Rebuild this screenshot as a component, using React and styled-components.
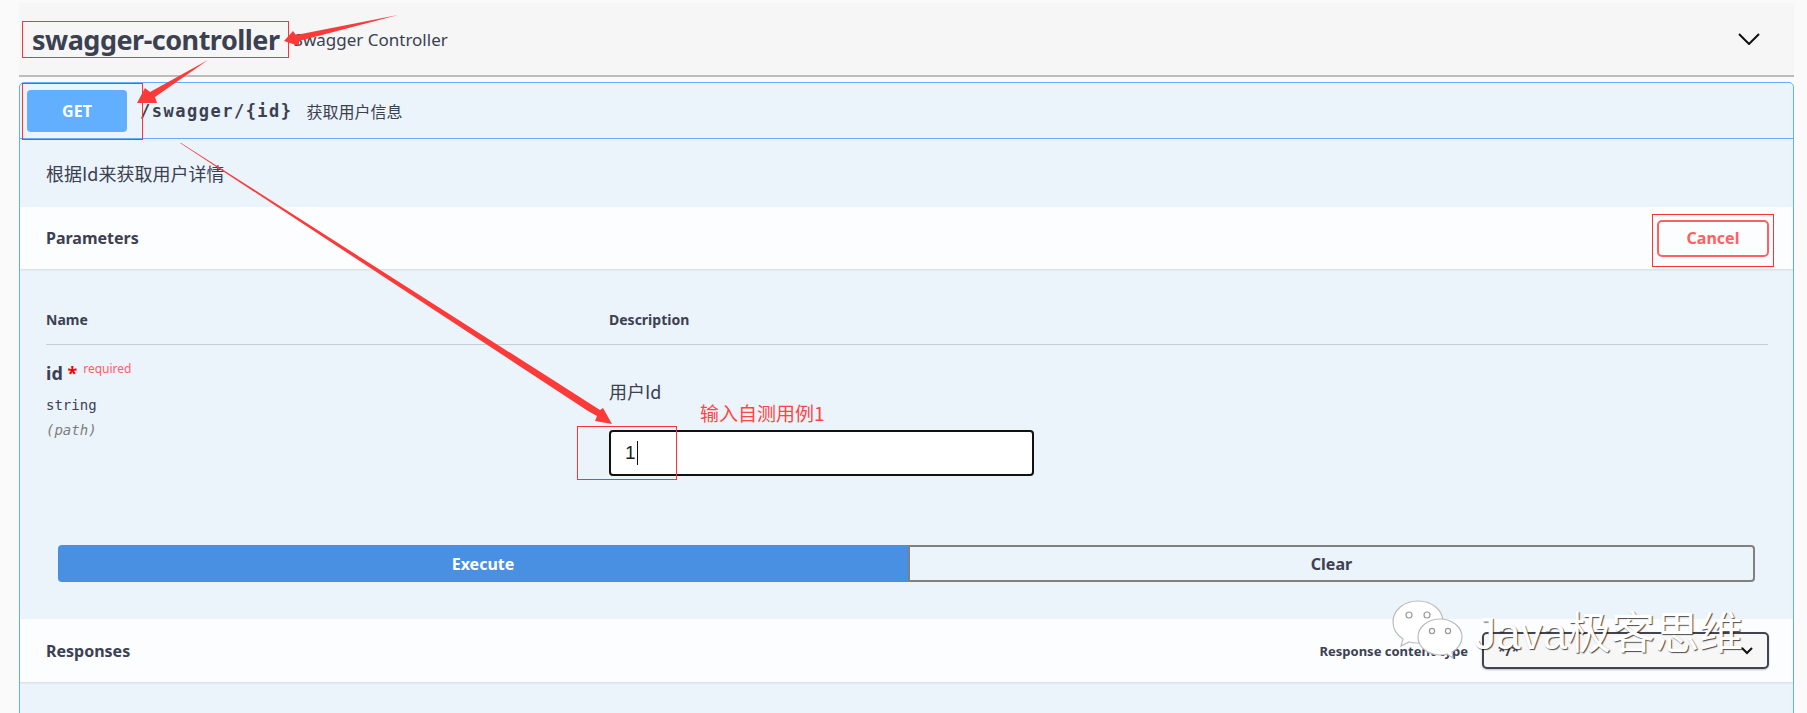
import React from 'react';
import styled, { createGlobalStyle } from 'styled-components';

const sans = '"Noto Sans", "Noto Sans CJK SC", sans-serif';
const cjk = '"Noto Sans CJK SC", "Noto Sans", sans-serif';
const mono = '"DejaVu Sans Mono", "Noto Sans CJK SC", monospace';

const GlobalStyle = createGlobalStyle`
  html, body {
    margin: 0;
    padding: 0;
    background: #fafafa;
    font-family: ${sans};
    color: #3b4151;
  }
`;

const App = () => {
  return (
    <Page>
      <GlobalStyle />
      <TagHeader>
        <TagTitle>swagger-controller</TagTitle>
        <TagNote>Swagger Controller</TagNote>
        <TagChevron viewBox="0 0 22 12" aria-hidden="true">
          <path d="M1 1l10 10L21 1" />
        </TagChevron>
      </TagHeader>

      <Opblock>
        <Summary>
          <MethodBadge>GET</MethodBadge>
          <PathText>/swagger/{'{id}'}</PathText>
          <SummaryNote>获取用户信息</SummaryNote>
        </Summary>

        <Description>根据Id来获取用户详情</Description>

        <SectionHeader>
          <SectionTitle>Parameters</SectionTitle>
          <CancelButton>Cancel</CancelButton>
        </SectionHeader>

        <ParamTable>
          <ParamHead>
            <HeadCell>Name</HeadCell>
            <HeadCell>Description</HeadCell>
          </ParamHead>
          <ParamRow>
            <div>
              <ParamName>
                id <Star>*</Star>
                <Required>required</Required>
              </ParamName>
              <ParamType>string</ParamType>
              <ParamIn>(path)</ParamIn>
            </div>
            <ParamBody>
              <ParamDesc>用户Id</ParamDesc>
              <InputBox>
                1<Caret />
              </InputBox>
            </ParamBody>
          </ParamRow>
        </ParamTable>

        <ButtonRow>
          <ExecuteButton>Execute</ExecuteButton>
          <ClearButton>Clear</ClearButton>
        </ButtonRow>

        <ResponsesHeader>
          <SectionTitle>Responses</SectionTitle>
          <ContentType>
            <ContentLabel>Response content type</ContentLabel>
            <SelectBox>
              */*
              <SelectChevron viewBox="0 0 12 8" aria-hidden="true">
                <path d="M1 1l5 5 5-5" />
              </SelectChevron>
            </SelectBox>
          </ContentType>
        </ResponsesHeader>
      </Opblock>

      <Annotations viewBox="0 0 1807 713" aria-hidden="true">
        <rect x="22.5" y="21.5" width="266" height="36" />
        <rect x="22.5" y="83.5" width="120" height="56" />
        <rect x="1652.5" y="214.5" width="121" height="52" />
        <rect x="577.5" y="426.5" width="99" height="53" />
        <polygon points="284,41 293,31 296,35 398,15 299,41 299,46" />
        <polygon points="137,103 145,88 150,92 208,60 155,97 157,103" />
        <polygon points="180,143 181,143 600,410 603,408 612,424 595,421 597,416 588,411" />
      </Annotations>

      <AnnotationText>输入自测用例1</AnnotationText>

      <Watermark>
        <WechatLogo viewBox="0 0 72 60" aria-hidden="true">
          <path className="bubble" d="M26 1C12 1 1 10 1 22c0 7 4 13 10 17l-2 7 8-4c3 1 6 1 9 1 14 0 25-9 25-21S40 1 26 1z" />
          <path className="bubble" d="M48 19c-12 0-22 8-22 18s10 18 22 18c2 0 5 0 7-1l6 4-1-6c6-3 10-9 10-15 0-10-10-18-22-18z" />
          <circle cx="17" cy="15" r="3" />
          <circle cx="35" cy="15" r="3" />
          <circle cx="40" cy="31" r="2.6" />
          <circle cx="56" cy="31" r="2.6" />
        </WechatLogo>
        <WatermarkText>Java极客思维</WatermarkText>
      </Watermark>
    </Page>
  );
};

const Page = styled.div`
  position: relative;
  width: 1807px;
  height: 713px;
  overflow: hidden;
  box-sizing: border-box;
  padding: 3px 13px 0 19px;
`;

const TagHeader = styled.div`
  display: flex;
  align-items: center;
  height: 72px;
  padding: 0 34px 0 13px;
  background: #f6f6f6;
  border-bottom: 2px solid #bdbdbd;
`;

const TagTitle = styled.span`
  font-size: 27px;
  font-weight: 700;
  letter-spacing: -0.5px;
  color: #3b4151;
`;

const TagNote = styled.span`
  margin-left: 14px;
  font-size: 17px;
  color: #3b4151;
`;

const TagChevron = styled.svg`
  margin-left: auto;
  width: 22px;
  height: 12px;
  fill: none;
  stroke: #111;
  stroke-width: 2;
`;

const Opblock = styled.div`
  margin-top: 5px;
  height: 640px;
  background: #ebf3fb;
  border: 1px solid #61affe;
  border-radius: 5px;
`;

const Summary = styled.div`
  display: flex;
  align-items: center;
  height: 55px;
  padding: 0 7px;
  border-bottom: 1px solid #61affe;
`;

const MethodBadge = styled.div`
  display: flex;
  align-items: center;
  justify-content: center;
  width: 100px;
  height: 42px;
  border-radius: 4px;
  background: #61affe;
  color: #fff;
  font-size: 16px;
  font-weight: 700;
`;

const PathText = styled.span`
  margin-left: 13px;
  font-family: ${mono};
  font-size: 17px;
  font-weight: 700;
  letter-spacing: 1.5px;
  color: #3b4151;
`;

const SummaryNote = styled.span`
  margin-left: 14px;
  font-family: ${cjk};
  font-size: 16px;
  color: #3b4151;
`;

const Description = styled.div`
  display: flex;
  align-items: center;
  height: 68px;
  padding: 0 26px;
  font-family: ${cjk};
  font-size: 18px;
  color: #3b4151;
`;

const SectionHeader = styled.div`
  display: flex;
  align-items: center;
  justify-content: space-between;
  height: 62px;
  padding: 0 24px 0 26px;
  background: #fcfdfe;
  box-shadow: 0 1px 2px rgba(0, 0, 0, 0.1);
`;

const SectionTitle = styled.span`
  font-size: 16px;
  font-weight: 700;
  color: #3b4151;
`;

const CancelButton = styled.button`
  width: 112px;
  height: 37px;
  box-sizing: border-box;
  border: 2px solid #ff6060;
  border-radius: 5px;
  background: transparent;
  color: #ff6060;
  font-family: ${sans};
  font-size: 16px;
  font-weight: 700;
`;

const ParamTable = styled.div`
  padding: 0 25px 0 26px;
`;

const ParamHead = styled.div`
  display: grid;
  grid-template-columns: 563px 1fr;
  padding: 41px 0 14px;
  border-bottom: 1px solid #c5cdd9;
`;

const HeadCell = styled.div`
  font-size: 14px;
  font-weight: 700;
  line-height: 20px;
  color: #3b4151;
`;

const ParamRow = styled.div`
  display: grid;
  grid-template-columns: 563px 1fr;
`;

const ParamName = styled.div`
  margin-top: 16px;
  font-size: 18px;
  font-weight: 700;
  line-height: 24px;
  color: #3b4151;
`;

const Star = styled.span`
  color: #ff0000;
`;

const Required = styled.sup`
  margin-left: 6px;
  font-size: 12px;
  font-weight: 400;
  line-height: 0;
  color: #ff6060;
`;

const ParamType = styled.div`
  margin-top: 9px;
  font-family: ${mono};
  font-size: 14px;
  line-height: 22px;
  color: #3b4151;
`;

const ParamIn = styled.div`
  margin-top: 3px;
  font-family: ${mono};
  font-size: 14px;
  font-style: italic;
  line-height: 22px;
  color: #7e7e7e;
`;

const ParamBody = styled.div`
  padding-top: 34px;
`;

const ParamDesc = styled.div`
  font-family: ${cjk};
  font-size: 18px;
  line-height: 24px;
  color: #3b4151;
`;

const InputBox = styled.div`
  display: flex;
  align-items: center;
  box-sizing: border-box;
  width: 425px;
  height: 46px;
  margin-top: 27px;
  padding-left: 14px;
  background: #fff;
  border: 2px solid #111;
  border-radius: 4px;
  font-family: "Liberation Sans", sans-serif;
  font-size: 19px;
  color: #222;
`;

const Caret = styled.span`
  width: 1px;
  height: 24px;
  margin-left: 1px;
  background: #111;
`;

const ButtonRow = styled.div`
  display: flex;
  margin-top: 69px;
  padding: 0 38px;
`;

const ExecuteButton = styled.button`
  flex: 0 0 850px;
  height: 37px;
  border: none;
  border-radius: 4px 0 0 4px;
  background: #4990e2;
  color: #fff;
  font-family: ${sans};
  font-size: 16px;
  font-weight: 700;
`;

const ClearButton = styled.button`
  flex: 1;
  height: 37px;
  border: 2px solid #808080;
  border-radius: 0 4px 4px 0;
  background: transparent;
  color: #3b4151;
  font-family: ${sans};
  font-size: 16px;
  font-weight: 700;
`;

const ResponsesHeader = styled(SectionHeader)`
  height: 63px;
  margin-top: 37px;
`;

const ContentType = styled.div`
  display: flex;
  align-items: center;
  gap: 14px;
`;

const ContentLabel = styled.span`
  font-size: 13px;
  font-weight: 700;
  color: #3b4151;
`;

const SelectBox = styled.div`
  display: flex;
  align-items: center;
  justify-content: space-between;
  box-sizing: border-box;
  width: 287px;
  height: 37px;
  padding: 0 14px;
  background: #f7f7f7;
  border: 2px solid #41444e;
  border-radius: 5px;
  box-shadow: 0 1px 2px rgba(0, 0, 0, 0.25);
  font-size: 14px;
  font-weight: 700;
  color: #3b4151;
`;

const SelectChevron = styled.svg`
  width: 12px;
  height: 8px;
  fill: none;
  stroke: #111;
  stroke-width: 2;
`;

const Annotations = styled.svg`
  position: absolute;
  inset: 0;
  width: 1807px;
  height: 713px;
  pointer-events: none;

  rect {
    fill: none;
    stroke: #f33;
    stroke-width: 1;
  }

  polygon {
    fill: #fb3a3a;
  }
`;

const AnnotationText = styled.div`
  position: absolute;
  left: 700px;
  top: 399px;
  font-family: ${cjk};
  font-size: 19px;
  line-height: 28px;
  color: #f44;
`;

const Watermark = styled.div`
  position: absolute;
  left: 1392px;
  top: 600px;
  display: flex;
  align-items: flex-start;
  gap: 10px;
`;

const WechatLogo = styled.svg`
  width: 72px;
  height: 60px;

  .bubble {
    fill: #fff;
    stroke: #bbb;
    stroke-width: 1.2;
  }

  circle {
    fill: #fff;
    stroke: #999;
    stroke-width: 1.2;
  }
`;

const WatermarkText = styled.div`
  margin-top: 6px;
  font-family: "Liberation Sans", ${cjk};
  font-size: 44px;
  line-height: 56px;
  color: #fff;
  text-shadow: 1px 1px 1px rgba(0, 0, 0, 0.7);
`;

export default App;
